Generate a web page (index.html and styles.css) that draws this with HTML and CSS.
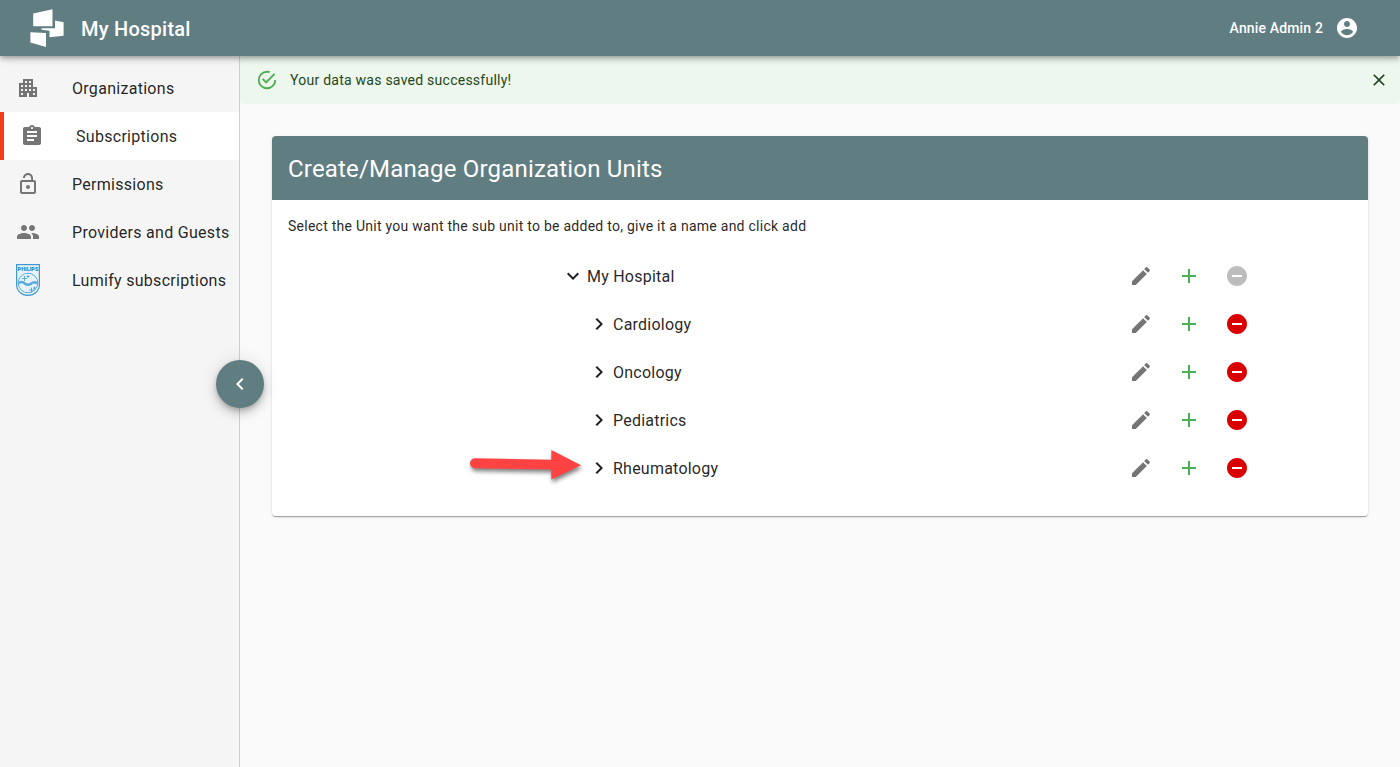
FILE: index.html
```html
<!DOCTYPE html>
<html lang="en">
<head>
<meta charset="utf-8">
<title>My Hospital</title>
<link rel="stylesheet" href="styles.css">
</head>
<body>
<svg class="defs" aria-hidden="true">
  <symbol id="edit" viewBox="0 0 24 24"><path d="M3 17.25V21h3.75L17.81 9.94l-3.75-3.75L3 17.25zM20.71 7.04c.39-.39.39-1.02 0-1.41l-2.34-2.34a.9959.9959 0 0 0-1.41 0l-1.83 1.83 3.75 3.75 1.83-1.83z"/></symbol>
  <symbol id="add" viewBox="0 0 24 24"><path d="M19 13h-6v6h-2v-6H5v-2h6V5h2v6h6v2z"/></symbol>
  <symbol id="remove" viewBox="0 0 24 24"><path d="M12 2C6.48 2 2 6.48 2 12s4.48 10 10 10 10-4.48 10-10S17.52 2 12 2zm5 11H7v-2h10v2z"/></symbol>
  <symbol id="right" viewBox="0 0 24 24"><path d="M10 6 8.59 7.41 13.17 12l-4.58 4.59L10 18l6-6z"/></symbol>
  <symbol id="down" viewBox="0 0 24 24"><path d="M16.59 8.59 12 13.17 7.41 8.59 6 10l6 6 6-6z"/></symbol>
</svg>

<header class="appbar">
  <svg class="logo" viewBox="0 0 56 56"><path d="M13.2 13.6 32.5 9.2V26.3H13.2zM35 20.500 43.600 22.300V35.800L29.500 37.300V30.800L21.500 29.800V28.200H35zM10.400 32.200 26 33V47L10.400 42.500z"/></svg>
  <h1 class="brand">My Hospital</h1>
  <span class="user">Annie Admin 2</span>
  <svg class="icon avatar" viewBox="0 0 24 24"><path d="M12 2C6.48 2 2 6.48 2 12s4.48 10 10 10 10-4.48 10-10S17.52 2 12 2zm0 3c1.66 0 3 1.34 3 3s-1.34 3-3 3-3-1.34-3-3 1.34-3 3-3zm0 14.2c-2.5 0-4.71-1.28-6-3.22.03-1.99 4-3.08 6-3.08 1.99 0 5.97 1.09 6 3.08-1.29 1.94-3.5 3.22-6 3.22z"/></svg>
</header>

<div class="layout">
  <nav class="sidebar">
    <a class="nav-item"><svg class="icon" viewBox="0 0 24 24"><path d="M17 11V3H7v4H3v14h8v-4h2v4h8V11h-4zM7 19H5v-2h2v2zm0-4H5v-2h2v2zm0-4H5V9h2v2zm4 4H9v-2h2v2zm0-4H9V9h2v2zm0-4H9V5h2v2zm4 8h-2v-2h2v2zm0-4h-2V9h2v2zm0-4h-2V5h2v2zm4 12h-2v-2h2v2zm0-4h-2v-2h2v2z"/></svg><span>Organizations</span></a>
    <a class="nav-item active"><svg class="icon" viewBox="0 0 24 24"><path d="M19 3h-4.18C14.4 1.84 13.3 1 12 1c-1.3 0-2.4.84-2.82 2H5c-1.1 0-2 .9-2 2v14c0 1.1.9 2 2 2h14c1.1 0 2-.9 2-2V5c0-1.1-.9-2-2-2zm-7 0c.55 0 1 .45 1 1s-.45 1-1 1-1-.45-1-1 .45-1 1-1zm2 14H7v-2h7v2zm3-4H7v-2h10v2zm0-4H7V7h10v2z"/></svg><span>Subscriptions</span></a>
    <a class="nav-item"><svg class="icon" viewBox="0 0 24 24"><path d="M12 17c1.1 0 2-.9 2-2s-.9-2-2-2-2 .9-2 2 .9 2 2 2zm6-9h-1V6c0-2.76-2.24-5-5-5S7 3.24 7 6h1.9c0-1.71 1.39-3.1 3.1-3.1s3.1 1.39 3.1 3.1v2H6c-1.1 0-2 .9-2 2v10c0 1.1.9 2 2 2h12c1.1 0 2-.9 2-2V10c0-1.1-.9-2-2-2zm0 12H6V10h12v10z"/></svg><span>Permissions</span></a>
    <a class="nav-item"><svg class="icon" viewBox="0 0 24 24"><path d="M16 11c1.66 0 2.99-1.34 2.99-3S17.66 5 16 5s-3 1.34-3 3 1.34 3 3 3zm-8 0c1.66 0 2.99-1.34 2.99-3S9.66 5 8 5 5 6.34 5 8s1.34 3 3 3zm0 2c-2.33 0-7 1.17-7 3.5V19h14v-2.5c0-2.33-4.67-3.5-7-3.5zm8 0c-.29 0-.62.02-.97.05 1.16.84 1.97 1.97 1.97 3.45V19h6v-2.5c0-2.33-4.67-3.5-7-3.5z"/></svg><span>Providers and Guests</span></a>
    <a class="nav-item"><svg class="philips" viewBox="0 0 24 32">
      <path class="shield" d="M.6.6H23.4V20.5C23.4 27 18.3 31.4 12 31.4S.6 27 .6 20.5z"/>
      <text class="mark" x="1.6" y="6.6" textLength="20.8" lengthAdjust="spacingAndGlyphs">PHILIPS</text>
      <circle class="ring" cx="12" cy="19" r="9.8"/>
      <path class="wave" d="M2.500 19.500c2-2 4-2 6.300 0s4 2 6.500 0 4-2 6.200 0"/>
      <path class="star" d="M8.500 12v5M6 14.500h5M12 11v3M10.500 12.500h3M15.500 23.500v5M13 26h5M18.500 22.500v3M17 24h3"/>
    </svg><span>Lumify subscriptions</span></a>
    <button class="collapse" aria-label="Collapse menu"><svg class="icon" viewBox="0 0 24 24"><path d="M15.410 7.410 14 6l-6 6 6 6 1.410-1.410L10.830 12z"/></svg></button>
  </nav>

  <main class="content">
    <div class="alert">
      <svg class="alert-icon" viewBox="0 0 24 24"><path d="M20 12A8 8 0 0 1 12 20A8 8 0 0 1 4 12A8 8 0 0 1 12 4C12.760 4 13.500 4.110 14.200 4.310L15.770 2.740C14.610 2.260 13.340 2 12 2A10 10 0 0 0 2 12A10 10 0 0 0 12 22A10 10 0 0 0 22 12M7.910 10.080L6.500 11.500L11 16L21 6L19.590 4.580L11 13.170L7.910 10.080Z"/></svg>
      <span class="message">Your data was saved successfully!</span>
      <svg class="close" viewBox="0 0 24 24"><path d="M19 6.410 17.590 5 12 10.590 6.410 5 5 6.410 10.590 12 5 17.590 6.410 19 12 13.410 17.590 19 19 17.590 13.410 12z"/></svg>
    </div>

    <section class="card">
      <h2 class="card-title">Create/Manage Organization Units</h2>
      <div class="card-body">
        <p class="hint">Select the Unit you want the sub unit to be added to, give it a name and click add</p>
        <div class="tree">
          <div class="row"><svg class="icon chevron"><use href="#down"/></svg><span class="name">My Hospital</span><svg class="icon edit"><use href="#edit"/></svg><svg class="icon add"><use href="#add"/></svg><svg class="icon disabled"><use href="#remove"/></svg></div>
          <div class="row child"><svg class="icon chevron"><use href="#right"/></svg><span class="name">Cardiology</span><svg class="icon edit"><use href="#edit"/></svg><svg class="icon add"><use href="#add"/></svg><svg class="icon remove"><use href="#remove"/></svg></div>
          <div class="row child"><svg class="icon chevron"><use href="#right"/></svg><span class="name">Oncology</span><svg class="icon edit"><use href="#edit"/></svg><svg class="icon add"><use href="#add"/></svg><svg class="icon remove"><use href="#remove"/></svg></div>
          <div class="row child"><svg class="icon chevron"><use href="#right"/></svg><span class="name">Pediatrics</span><svg class="icon edit"><use href="#edit"/></svg><svg class="icon add"><use href="#add"/></svg><svg class="icon remove"><use href="#remove"/></svg></div>
          <div class="row child"><svg class="icon chevron"><use href="#right"/></svg><span class="name">Rheumatology</span><svg class="icon edit"><use href="#edit"/></svg><svg class="icon add"><use href="#add"/></svg><svg class="icon remove"><use href="#remove"/></svg>
            <svg class="pointer" viewBox="0 0 112 32"><path d="M5 8.300 81.300 9.800V0L111 15.200 81.300 29.500V19.500L5 18.300A5 5 0 0 1 5 8.300z"/></svg>
          </div>
        </div>
      </div>
    </section>
  </main>
</div>
</body>
</html>
```

FILE: styles.css
```css
* { box-sizing: border-box; }
body {
  margin: 0;
  height: 767px;
  overflow: hidden;
  display: flex;
  flex-direction: column;
  background: #fafafa;
  color: rgba(0, 0, 0, 0.87);
  font: 400 16px/24px Roboto, sans-serif;
  letter-spacing: 0.15px;
}
h1, h2, p { margin: 0; }
.defs { display: none; }
.icon { width: 24px; height: 24px; flex: none; fill: currentColor; }

.appbar {
  height: 56px;
  flex: none;
  display: flex;
  align-items: center;
  padding: 0 41px 0 20px;
  background: #607d82;
  color: #fff;
  position: relative;
  z-index: 2;
  box-shadow: 0 2px 4px -1px rgba(0,0,0,.2), 0 4px 5px rgba(0,0,0,.14), 0 1px 10px rgba(0,0,0,.12);
}
.logo { width: 56px; height: 56px; fill: #fff; }
.brand { flex: 1; margin-left: 5px; padding-top: 2px; font-size: 20px; font-weight: 500; letter-spacing: 0.25px; }
.user { font-size: 14px; font-weight: 500; margin-right: 12px; }

.layout { flex: 1; display: flex; min-height: 0; }
.sidebar {
  width: 240px;
  flex: none;
  padding-top: 8px;
  background: #f5f5f5;
  border-right: 1px solid #cfcfcf;
  position: relative;
}
.nav-item {
  height: 48px;
  display: flex;
  align-items: center;
  padding-left: 16px;
  white-space: nowrap;
  letter-spacing: 0.29px;
}
.nav-item span { padding-top: 2px; }
.nav-item .icon { color: #757575; margin-right: 32px; }
.active { background: #fff; border-left: 4px solid #f23c1a; }
.philips { width: 24px; height: 32px; margin-right: 32px; overflow: visible; }
.shield { fill: #e8f3f9; stroke: #3f98cf; stroke-width: 1.2; }
.mark { font: 900 5.5px Roboto, sans-serif; fill: #2588c6; letter-spacing: 0; }
.ring, .wave, .star { fill: none; stroke: #5aaad9; }
.wave { stroke-width: 2.4; }
.collapse {
  position: absolute;
  left: 216px;
  top: 304px;
  width: 48px;
  height: 48px;
  padding: 0;
  border: 0;
  border-radius: 50%;
  display: grid;
  place-items: center;
  color: #fff;
  background: #607d82;
  box-shadow: 0 3px 5px -1px rgba(0,0,0,.2), 0 6px 10px rgba(0,0,0,.14), 0 1px 18px rgba(0,0,0,.12);
}

.content { flex: 1; min-width: 0; }
.alert {
  height: 48px;
  display: flex;
  align-items: center;
  padding: 0 11px 0 16px;
  border-radius: 4px;
  background: #edf7ed;
  color: #1e4620;
  font-size: 14px;
  letter-spacing: 0.25px;
}
.alert-icon { width: 22px; height: 22px; fill: #4caf50; margin-right: 12px; }
.message { flex: 1; }
.close { width: 20px; height: 20px; fill: #1e4620; }

.card {
  margin: 32px;
  height: 380px;
  border-radius: 4px;
  background: #fff;
  overflow: hidden;
  box-shadow: 0 2px 1px -1px rgba(0,0,0,.2), 0 1px 1px rgba(0,0,0,.14), 0 1px 3px rgba(0,0,0,.12);
}
.card-title {
  height: 64px;
  padding-left: 16px;
  background: #607d82;
  color: #fff;
  font-size: 24px;
  font-weight: 400;
  line-height: 66px;
  letter-spacing: 0.18px;
}
.card-body { padding: 16px; }
.hint { font-size: 14px; line-height: 20px; letter-spacing: 0.26px; }
.tree { margin: 16px 103px 0 273px; }
.row { height: 48px; display: flex; align-items: center; position: relative; }
.child { padding-left: 26px; }
.name { flex: 1; margin-left: 2px; padding-top: 2px; letter-spacing: 0.23px; }
.row .icon + .icon { margin-left: 24px; }
.edit { color: #757575; }
.add { color: #4caf50; }
.remove { color: #d90000; }
.disabled { color: #bdbdbd; }
.pointer {
  position: absolute;
  left: -91px;
  top: 6px;
  width: 112px;
  height: 32px;
  overflow: visible;
  fill: #ff4343;
  filter: drop-shadow(1px 3px 2px rgba(0,0,0,.5));
}
```
